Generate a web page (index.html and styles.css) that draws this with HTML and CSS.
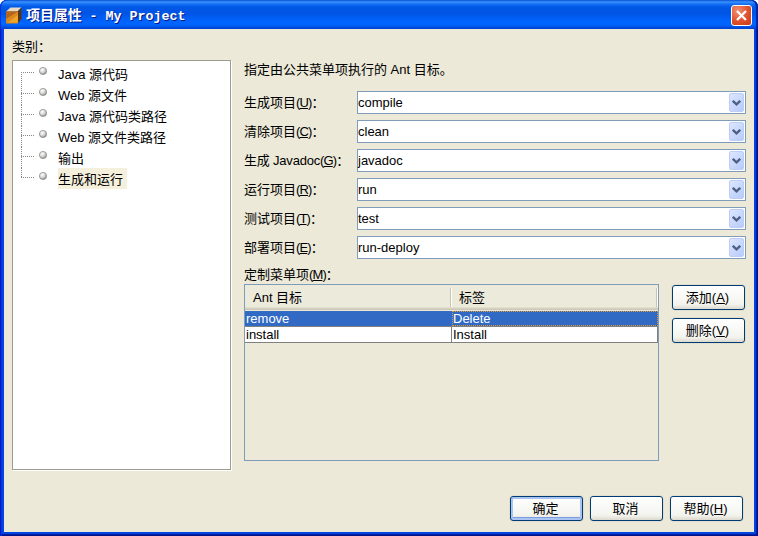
FILE: index.html
```html
<!DOCTYPE html>
<html lang="zh-CN">
<head>
<meta charset="utf-8">
<title>项目属性 - My Project</title>
<link rel="stylesheet" href="styles.css">
</head>
<body>
<svg width="0" height="0" class="defs">
  <defs>
    <radialGradient id="ball" cx="38%" cy="32%" r="70%">
      <stop offset="0" stop-color="#fff"/><stop offset=".55" stop-color="#d6d6d2"/><stop offset="1" stop-color="#888"/>
    </radialGradient>
    <symbol id="dot" viewBox="0 0 8 8"><circle cx="4" cy="4" r="3.6" fill="url(#ball)" stroke="#909090" stroke-width=".8"/></symbol>
    <symbol id="arrow" viewBox="0 0 9 6"><path d="M.8 .8 4.5 4.4 8.2 .8" fill="none" stroke="#4d6185" stroke-width="2.3"/></symbol>
  </defs>
</svg>
<div class="window">
  <header class="titlebar">
    <svg class="cube" width="16" height="17" viewBox="0 0 16 17">
      <path d="M0 4.5 4.5 .5 15.5 .5 11.5 4.5Z" fill="#ead9c0"/>
      <path d="M11.5 4.5 15.5 .5V12L11.5 16.5Z" fill="#55341a"/>
      <path d="M0 4.5H12V16.5H0Z" fill="#d98a1c"/>
      <path d="M0 4.5H12L0 12Z" fill="#b5661a"/>
      <path d="M2 15.5 12 8V15.5Z" fill="#f2a52c"/>
    </svg>
    <h1 class="title"><span class="title-cn">项目属性</span> - My Project</h1>
    <button class="close"><svg width="11" height="11" viewBox="0 0 11 11"><path d="M1 1 10 10M10 1 1 10" stroke="#fff" stroke-width="2.3"/></svg></button>
  </header>
  <main class="client">
    <div class="panes">
      <section class="categories">
        <div class="caption">类别<b>：</b></div>
        <ul class="tree">
          <li><svg class="dot"><use href="#dot"/></svg><span>Java 源代码</span></li>
          <li><svg class="dot"><use href="#dot"/></svg><span>Web 源文件</span></li>
          <li><svg class="dot"><use href="#dot"/></svg><span>Java 源代码类路径</span></li>
          <li><svg class="dot"><use href="#dot"/></svg><span>Web 源文件类路径</span></li>
          <li><svg class="dot"><use href="#dot"/></svg><span>输出</span></li>
          <li><svg class="dot"><use href="#dot"/></svg><span class="selected">生成和运行</span></li>
        </ul>
      </section>
      <section class="settings">
        <p class="intro">指定由公共菜单项执行的 Ant 目标。</p>
        <div class="fields">
          <label>生成项目<b>(<u>U</u>)：</b></label><div class="combo"><span>compile</span><i><svg><use href="#arrow"/></svg></i></div>
          <label>清除项目<b>(<u>C</u>)：</b></label><div class="combo"><span>clean</span><i><svg><use href="#arrow"/></svg></i></div>
          <label class="tight">生成 Javadoc<b>(<u>G</u>)：</b></label><div class="combo"><span>javadoc</span><i><svg><use href="#arrow"/></svg></i></div>
          <label>运行项目<b>(<u>R</u>)：</b></label><div class="combo"><span>run</span><i><svg><use href="#arrow"/></svg></i></div>
          <label>测试项目<b>(<u>T</u>)：</b></label><div class="combo"><span>test</span><i><svg><use href="#arrow"/></svg></i></div>
          <label>部署项目<b>(<u>E</u>)：</b></label><div class="combo"><span>run-deploy</span><i><svg><use href="#arrow"/></svg></i></div>
        </div>
        <div class="menu-caption">定制菜单项<b>(<u>M</u>)：</b></div>
        <div class="custom">
          <div class="table">
            <div class="row head"><span>Ant 目标</span><span>标签</span></div>
            <div class="row active"><span>remove</span><span class="focus">Delete</span></div>
            <div class="row"><span>install</span><span>Install</span></div>
          </div>
          <div class="side">
            <button class="btn">添加(<u>A</u>)</button>
            <button class="btn">删除(<u>V</u>)</button>
          </div>
        </div>
      </section>
    </div>
    <footer class="actions">
      <button class="btn default">确定</button>
      <button class="btn">取消</button>
      <button class="btn">帮助(<u>H</u>)</button>
    </footer>
  </main>
</div>
</body>
</html>
```
FILE: styles.css
```css
* { box-sizing: border-box; }
body {
  margin: 0;
  background: #fff;
  overflow: hidden;
  font: 13px/16px "Liberation Sans", "Noto Sans CJK SC", sans-serif;
  color: #000;
}
svg { display: block; }
u { text-decoration: underline; text-decoration-thickness: 1px; text-underline-offset: 1px; }
b { font-weight: normal; letter-spacing: -.9px; }
.defs { position: absolute; }
.window {
  width: 758px;
  height: 536px;
  display: flex;
  flex-direction: column;
  padding: 0 4px 4px;
  border-radius: 7px 7px 0 0;
  background: #0046e0;
  box-shadow: inset 1px 0 #0019cf, inset 2px 0 #0733dd, inset -1px -1px #00138c, inset -2px -2px #001ea0, inset -3px -3px #0441d8;
}
.titlebar {
  height: 29px;
  flex: none;
  display: flex;
  align-items: center;
  margin: 0 -4px;
  padding: 2px 6px 0;
  border-radius: 7px 7px 0 0;
  background: linear-gradient(#0a4fd0 0, #3a93ff 2px, #1671f5 4px, #0058e6 7px, #0054e3 13px, #0061fb 20px, #0066ff 24px, #005bf0 26px, #003dcc 29px);
  box-shadow: inset 1px 0 #0831d9, inset -2px 0 #0025a8;
}
.title {
  flex: 1;
  margin: 0 0 0 4px;
  padding-top: 1px;
  font: bold 13.33px/18px "Liberation Mono", "Noto Sans CJK SC", monospace;
  color: #fff;
  text-shadow: 1px 1px #0a1883;
  white-space: pre;
}
.title-cn { font-size: 14px; letter-spacing: -.1px; }
.close {
  width: 21px;
  height: 21px;
  display: grid;
  place-items: center;
  padding: 0;
  border: 1px solid #fff;
  border-radius: 3px;
  background: radial-gradient(circle at 30% 25%, #f09070, #e0502c 55%, #c63c18);
}
.client {
  flex: 1;
  display: flex;
  flex-direction: column;
  padding: 9px 8px 11px;
  background: #ece9d8;
}
.panes { display: flex; gap: 13px; height: 432px; }
.categories { width: 219px; }
.caption { height: 22px; line-height: 18px; }
.tree {
  width: 219px;
  height: 410px;
  margin: 0;
  padding: 2px 0 0 8px;
  list-style: none;
  border: 1px solid #9d9d8f;
  background: #fff;
  box-shadow: 1px 1px #fff;
}
.tree li {
  height: 21px;
  display: flex;
  background:
    repeating-linear-gradient(90deg, #888 0 1px, transparent 1px 2px) 0 9px / 14px 1px no-repeat,
    repeating-linear-gradient(#888 0 1px, transparent 1px 2px) 0 0 / 1px 21px no-repeat;
}
.tree li:first-child { background-position: 0 9px, 0 9px; }
.tree li:last-child { background-size: 14px 1px, 1px 9px; }
.dot { width: 8px; height: 8px; margin: 4px 10px 0 18px; }
.tree span { height: 21px; padding: 0 3px 0 1px; line-height: 24px; }
.tree .selected { margin-left: 1px; padding: 0 4px 0 0; background: #f5f0dc; }
.settings { width: 502px; padding-top: 23px; }
.intro { height: 30px; margin: 0; line-height: 18px; }
.fields {
  display: grid;
  grid-template-columns: 113px 389px;
  grid-auto-rows: 23px;
  row-gap: 6px;
}
label { line-height: 24px; white-space: nowrap; }
.tight { letter-spacing: -.2px; }
.combo {
  display: flex;
  justify-content: space-between;
  border: 1px solid #7f9db9;
  background: #fff;
  line-height: 21px;
}
.combo i {
  width: 15px;
  margin: 1px;
  display: grid;
  place-items: center;
  border: 1px solid #bccdf8;
  border-radius: 2px;
  background: linear-gradient(135deg, #dce6ff, #b7cbfa);
}
.combo svg { width: 9px; height: 6px; }
.menu-caption { height: 25px; padding-top: 7px; line-height: 18px; }
.custom { display: flex; gap: 13px; }
.table { width: 415px; height: 177px; border: 1px solid #7f9db9; }
.row {
  display: grid;
  grid-template-columns: 207px 206px;
  height: 16px;
  border-bottom: 1px solid #808080;
  background: #fff;
  line-height: 15px;
}
.row span { padding-left: 1px; border-right: 1px solid #808080; }
.row.head {
  height: 26px;
  border: 0;
  background: linear-gradient(#ebeadb 0 22px, #e2decd 22px 23px, #d6d2c2 23px 24px, #cbc7b8 24px 25px, #ece9d8 25px);
  line-height: 25px;
}
.row.head span {
  padding-left: 8px;
  border: 0;
  background: linear-gradient(90deg, #c7c5b2 1px, #fff 1px) right 3px / 2px 19px no-repeat;
}
.row.head span + span { padding-left: 7px; }
.row.active { background: #316ac5; color: #fff; }
.row.active span { border-color: #316ac5; }
.row.active .focus { padding: 0; border: 1px dotted #e09a30; line-height: 13px; }
.side { display: flex; flex-direction: column; gap: 8px; padding-top: 1px; }
.btn {
  width: 73px;
  height: 25px;
  padding: 0 2px 0 0;
  border: 1px solid #003c74;
  border-radius: 3px;
  background: linear-gradient(#fff, #f3f3ee 80%, #dcd8cc);
  box-shadow: 0 0 0 1px #e3dfce;
  font: inherit;
  line-height: 22px;
}
.default { box-shadow: inset 0 0 0 2px #a9c3f3, inset 0 -1px 0 2px #7d9de0, 0 0 0 1px #e3dfce; }
.actions { display: flex; justify-content: flex-end; gap: 7px; margin: 26px 3px 0 0; }
```
